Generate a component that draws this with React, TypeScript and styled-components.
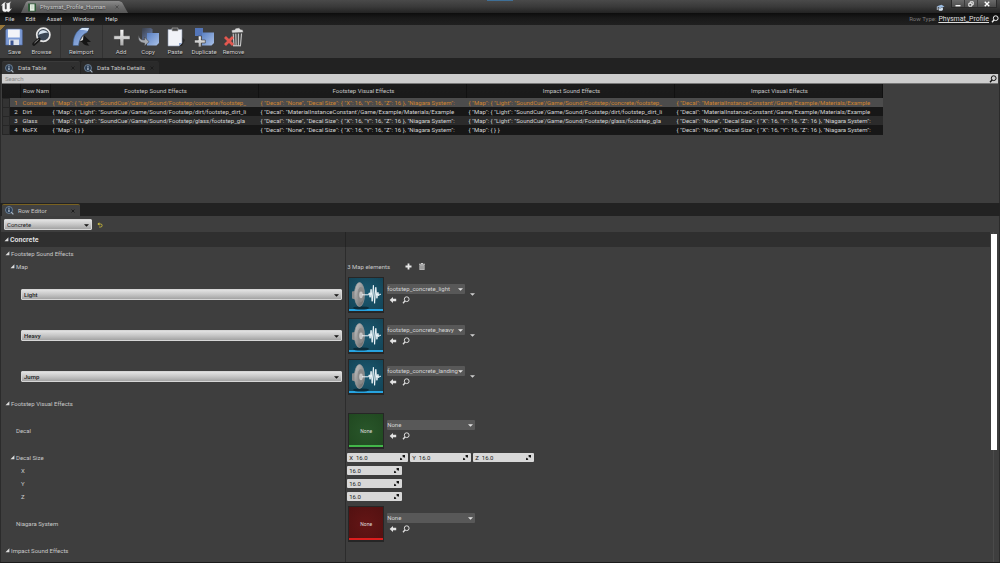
import React from "react";
import styled, { createGlobalStyle } from "styled-components";

const Global = createGlobalStyle`
  * { box-sizing: border-box; }
  body { margin: 0; background: #3e3e3e; }
  button, input, select { font: inherit; color: inherit; margin: 0; padding: 0; border: 0; border-radius: 0; background: none; outline: 0; }
  button, select { cursor: pointer; }
  svg { display: block; flex: none; }
`;

const Window = styled.div`
  display: flex;
  flex-direction: column;
  min-height: 100vh;
  font: 6px/8px Roboto, "Liberation Sans", sans-serif;
  color: #c8c8c8;
  background: #3e3e3e;
  border-bottom: 1px solid #1c1c1c;
`;

const TitleBar = styled.header`
  display: grid;
  grid-template-columns: 1fr 26px 1fr;
  height: 13px;
  background: linear-gradient(#4a4a4a, #3a3a3a 50%, #232323);
`;
const TitleLeft = styled.div`
  display: flex;
  align-items: flex-end;
  gap: 9px;
  padding-left: 1px;
`;
const DocTab = styled.div`
  display: flex;
  align-items: center;
  gap: 4px;
  width: 107px;
  height: 12px;
  padding: 0 9px 0 7px;
  color: #c8c8c8;
  background: linear-gradient(#8c8c8c, #6b6b6b 50%, #565656);
  clip-path: polygon(0 100%, 5px 10%, 7px 0, 98px 0, 101px 10%, 100% 100%);
`;
const DocName = styled.span`
  flex: 1;
  white-space: nowrap;
  text-shadow: 0 1px 1px #333;
`;
const TopMark = styled.div`
  height: 1px;
  background: #3f6f96;
`;
const TitleRight = styled.div`
  display: flex;
  justify-content: flex-end;
  gap: 6px;
  padding-right: 3px;
`;
const Tutorial = styled.button`
  align-self: flex-end;
  height: 11px;
`;
const WindowButtons = styled.div`
  display: flex;
  height: 8px;
  background: linear-gradient(#6a6a6a, #4b4b4b);
  border: 1px solid #2a2a2a;
  border-top: 0;
`;
const WindowButton = styled.button<{ $wide?: boolean }>`
  display: grid;
  place-items: center;
  width: ${(p) => (p.$wide ? 18 : 13)}px;
  border-right: 1px solid #3a3a3a;
  &:last-child { border-right: 0; }
`;

const MenuBar = styled.nav`
  display: flex;
  align-items: center;
  height: 12px;
  padding: 0 1px 0 5px;
  background: linear-gradient(#0d0d0d, #191919 40%, #202020);
`;
const MenuItem = styled.button`
  height: 12px;
  margin-right: 11px;
  color: #d8d8d8;
`;
const RowType = styled.div`
  display: flex;
  align-items: center;
  gap: 2px;
  margin-left: auto;
  color: #7b7b7b;
`;
const TypeLink = styled.a`
  font-size: 7px;
  color: #dcdcdc;
`;

const Toolbar = styled.div`
  display: flex;
  height: 33px;
  padding-left: 1px;
  background: linear-gradient(135deg, #96763a 4px, transparent 4px), #3e3e3e;
`;
const ToolGroup = styled.div`
  display: flex;
  padding: 2px 5px 0;
  border-right: 1px solid #323232;
  &:first-child { padding-left: 0; }
  &:last-child { border-right: 0; }
`;
const ToolButton = styled.button`
  display: flex;
  flex-direction: column;
  align-items: center;
  gap: 1px;
  min-width: 27px;
  height: 30px;
  padding: 0 3px;
  color: #cecece;
  text-shadow: 0 1px 1px #111;
`;

const TabStrip = styled.div<{ $h: number }>`
  display: flex;
  align-items: flex-end;
  height: ${(p) => p.$h}px;
  padding-left: 2px;
  background: #222;
`;
const Tab = styled.button<{ $active?: boolean; $focus?: boolean }>`
  display: flex;
  align-items: center;
  gap: 4px;
  width: 78px;
  height: ${(p) => (p.$focus ? 12 : 13)}px;
  margin-right: 1px;
  padding: 0 5px 0 3px;
  border-top: 1px solid ${(p) => (p.$focus ? "#7a6220" : p.$active ? "#3a3a3a" : "#2c2c2c")};
  border-radius: 2px 2px 0 0;
  background: ${(p) => (p.$focus ? "#414141" : p.$active ? "#303030" : "#2a2a2a")};
  text-align: left;
  white-space: nowrap;
`;
const TabLabel = styled.span`
  flex: 1;
`;

const TablePanel = styled.section`
  min-height: 129px;
  padding: 0 1px;
  border-left: 1px solid #2b2b2b;
  border-right: 1px solid #2b2b2b;
`;
const SearchBox = styled.label`
  display: flex;
  align-items: center;
  height: 10px;
  padding: 0 1px 0 3px;
  color: #111;
  background: #cdcdcd;
  border-bottom: 1px solid #777;
`;
const SearchInput = styled.input`
  flex: 1;
  height: 8px;
  &::placeholder { color: #8a8a8a; opacity: 1; }
`;
const Table = styled.table`
  width: 881px;
  table-layout: fixed;
  border-collapse: collapse;
  color: #d4d4d4;
  background: #181818;
`;
const HeadCell = styled.th<{ $left?: boolean }>`
  height: 14px;
  padding: 0 0 1px 2px;
  overflow: hidden;
  font-weight: 400;
  text-align: ${(p) => (p.$left ? "left" : "center")};
  white-space: nowrap;
  color: #c4c4c4;
  background: linear-gradient(#1c1c1c, #191919);
  border-right: 1px solid #111;
`;
const Row = styled.tr<{ $selected?: boolean; $alt?: boolean }>`
  height: 9px;
  color: ${(p) => (p.$selected ? "#d08430" : "inherit")};
  background: ${(p) => (p.$selected ? "#4c4c4c" : p.$alt ? "#2b2b2b" : "#171717")};
`;
const Cell = styled.td<{ $right?: boolean }>`
  height: 9px;
  padding: 0 3px 0 2px;
  overflow: hidden;
  line-height: 9px;
  text-align: ${(p) => (p.$right ? "right" : "left")};
  white-space: nowrap;
`;
const Handle = styled.td`
  padding: 0;
  background: #333;
  border: 1px solid #262626;
`;

const Editor = styled.section`
  display: flex;
  flex-direction: column;
  flex: 1;
  border-left: 1px solid #2b2b2b;
  border-right: 1px solid #2b2b2b;
`;
const RowPicker = styled.div`
  display: flex;
  align-items: center;
  gap: 5px;
  height: 16px;
  padding: 3px 3px 2px;
`;
const SelectShell = styled.div<{ $w?: string; $h: number; $dark?: boolean }>`
  position: relative;
  width: ${(p) => p.$w ?? "100%"};
  height: ${(p) => p.$h}px;
  color: ${(p) => (p.$dark ? "#d4d4d4" : "#1c1c1c")};
  background: ${(p) => (p.$dark ? "#585858" : "linear-gradient(#e2e2e2, #c9c9c9 45%, #a3a3a3)")};
  border: ${(p) => (p.$dark ? "0" : "1px solid #d6d6d6")};
  border-radius: 1px;
  > svg { position: absolute; right: 2px; top: calc(50% - 1px); pointer-events: none; }
`;
const NativeSelect = styled.select<{ $dark?: boolean; $strong?: boolean }>`
  display: block;
  appearance: none;
  width: 100%;
  height: 100%;
  padding: 0 6px 0 ${(p) => (p.$dark ? 0 : 2)}px;
  font-weight: ${(p) => (p.$strong ? 500 : 400)};
`;
const IconButton = styled.button`
  display: grid;
  place-items: center;
`;

const Scroller = styled.div`
  display: flex;
  flex: 1;
  padding-right: 2px;
`;
const Details = styled.div`
  flex: 1;
  background: linear-gradient(90deg, transparent 34.8%, #2c2c2c 0, #2c2c2c calc(34.8% + 1px), transparent 0);
`;
const ScrollTrack = styled.div`
  width: 7px;
  padding: 2px 0 0 1px;
  background: linear-gradient(90deg, transparent 3px, #4a4a4a 3px, #4a4a4a 4px, transparent 4px);
`;
const ScrollThumb = styled.div`
  height: 66%;
  background: #fff;
`;
const Category = styled.h2`
  display: flex;
  align-items: center;
  gap: 1px;
  height: 15px;
  margin: 0;
  padding-left: 3px;
  font-size: 7px;
  font-weight: 700;
  color: #dedede;
  background: linear-gradient(90deg, #2f2f2f 34.8%, #242424 0, #242424 calc(34.8% + 1px), #2f2f2f 0);
`;
const Prop = styled.div<{ $tall?: boolean }>`
  display: grid;
  grid-template-columns: calc(34.8% + 1px) 1fr;
  align-items: center;
  height: ${(p) => (p.$tall ? 41 : 13)}px;
`;
const Name = styled.div<{ $level: number; $fold?: boolean }>`
  display: flex;
  align-items: center;
  gap: 1px;
  padding: 0 4px 0 ${(p) => p.$level * 5 + (p.$fold ? -1 : 0)}px;
`;
const Value = styled.div`
  display: flex;
  align-items: center;
  padding-left: 1px;
`;
const MapItems = styled.div`
  padding: 1px 0 0;
`;
const MapTools = styled.div`
  display: flex;
  gap: 7px;
  margin-left: 15px;
`;
const Thumb = styled.div<{ $kind: "sound" | "decal" | "niagara" }>`
  display: grid;
  place-items: center;
  width: 36px;
  height: 36px;
  margin: 0 3px 0 1px;
  font-size: 5px;
  color: #ddd;
  border: 1px solid #262626;
  box-shadow: inset 0 -1px #262626, inset 0 -3px ${(p) => ({ sound: "#27a3e0", decal: "#42b649", niagara: "#dc1e1e" })[p.$kind]};
  background: ${(p) =>
    ({
      sound: "radial-gradient(circle at 50% 45%, #1b5a72, #134254)",
      decal: "radial-gradient(circle, #29562a, #204820)",
      niagara: "radial-gradient(circle, #641515, #521111)",
    })[p.$kind]};
`;
const AssetStack = styled.div`
  display: flex;
  flex-direction: column;
  gap: 2px;
  padding-bottom: 2px;
`;
const AssetTools = styled.div`
  display: flex;
  gap: 5px;
  padding-left: 2px;
`;
const MoreButton = styled(IconButton)`
  margin-left: 4px;
  width: 7px;
  height: 6px;
`;
const NumberBox = styled.label<{ $wide?: boolean }>`
  display: flex;
  align-items: center;
  gap: 3px;
  width: ${(p) => (p.$wide ? 61 : 55)}px;
  height: 9px;
  margin-right: 2px;
  padding: 0 3px 0 2px;
  color: #222;
  background: #d8d8d8;
  border-radius: 1px;
`;
const NumberInput = styled.input`
  flex: 1;
  min-width: 0;
  height: 9px;
`;

/* ---------- icons ---------- */
const Caret = ({ w = 5, color = "#151515" }: { w?: number; color?: string }) => (
  <svg width={w} height={3} viewBox="0 0 6 3"><path d="M0 0h6L3 3z" fill={color} /></svg>
);
const Fold = () => (
  <svg width="5" height="5" viewBox="0 0 5 5"><path d="M4.4 .3V4.2H.5z" fill="#ddd" /></svg>
);
const Lens = ({ size = 8, color = "#ddd" }: { size?: number; color?: string }) => (
  <svg width={size} height={size} viewBox="0 0 8 8" fill="none" stroke={color}>
    <circle cx="4.7" cy="3.2" r="2.4" strokeWidth="1" />
    <path d="M3 5L1 7.2" strokeWidth="1.4" />
  </svg>
);
const BackArrow = () => (
  <svg width="8" height="8" viewBox="0 0 8 8"><path d="M.6 4L4 1v1.700h3.200v2.600H4V7z" fill="#e2e2e2" /></svg>
);
const Plus = () => (
  <svg width="7" height="7" viewBox="0 0 7 7"><path d="M2.600 .5h1.800v2.100h2.100v1.800H4.400v2.100H2.600V4.400H.5V2.600h2.100z" fill="#e8e8e8" /></svg>
);
const Trash = () => (
  <svg width="6" height="7" viewBox="0 0 6 7">
    <path d="M2 0h2v.7h2v1H0v-1h2z" fill="#cfcfcf" />
    <path d="M.4 2.100h5.200V7H.4z" fill="#bdbdbd" />
    <path d="M1.800 2.800v3.500M3 2.800v3.500M4.200 2.800v3.500" stroke="#666" strokeWidth=".5" />
  </svg>
);
const Reset = () => (
  <svg width="6" height="6" viewBox="0 0 6 6" fill="none" stroke="#c9b93a">
    <path d="M1.200 2h2.400a1.400 1.400 0 0 1 0 3H2.200" strokeWidth=".9" />
    <path d="M2.400 .2L.4 2l2 1.700z" fill="#c9b93a" stroke="none" />
  </svg>
);
const Spin = () => (
  <svg width="5" height="5" viewBox="0 0 5 5" fill="#161616">
    <path d="M2 0h3v3L3.900 1.900 3.200 2.500 2.400 1.700 3.100 1z" />
    <path d="M0 2.400L1 3.400l.4-.4.7.7-.5.4L2.500 5H0z" />
  </svg>
);
const TabIcon = () => (
  <svg width="9" height="9" viewBox="0 0 9 9">
    <circle cx="4" cy="4" r="3.500" fill="#2a3b50" stroke="#71859a" strokeWidth=".9" />
    <path d="M3.400 3.400h1.100v2.700H3.400zM3.400 1.800h1.100v1H3.400z" fill="#cfdcea" />
    <path d="M6.200 6.200L8.400 8.400" stroke="#a9b8c7" strokeWidth="1.200" />
  </svg>
);
const Cross = ({ color = "#1b1b1b", s = 4 }: { color?: string; s?: number }) => (
  <svg width={s} height={s} viewBox="0 0 4 4"><path d="M.5 .5l3 3M3.500 .5l-3 3" stroke={color} strokeWidth=".9" /></svg>
);
const Logo = () => (
  <svg width="11" height="12" viewBox="0 0 11 12">
    <path d="M.5 4.600C1.300 3 2.600 1.800 4.600 1.200c-.6.5-.8.9-.8 1.500v4.600c0 .7.4 1.100.9 1.100.4 0 .8-.2 1.100-.5V3.400c0-.5-.2-.8-.6-1 1.800-.2 3.400-.7 4.700-1.700-.8.9-1.100 1.400-1.100 2.300v4.400c0 .6.2.8.5.8.3 0 .7-.3 1.100-.7-.6 1.700-2 2.900-3.300 3.500L5.900 9.900c-.6.6-1.200.9-2.100.9C2.300 10.700 1.500 9.700 1.500 8.300V4.500c0-.4-.1-.6-.4-.6-.2 0-.4.3-.6.7z" fill="#f6f6f6" stroke="#f6f6f6" strokeWidth=".3" />
  </svg>
);
const DocIcon = () => (
  <svg width="8" height="9" viewBox="0 0 8 9">
    <path d="M0 .5h8v8H0z" fill="#2f5a38" />
    <path d="M2 1.200h4.500v6.600H2z" fill="#e4ede2" />
    <path d="M3 3h2.500M3 5h2.500" stroke="#a9bda9" strokeWidth=".6" />
  </svg>
);
const Cap = () => (
  <svg width="9" height="8" viewBox="0 0 9 8">
    <path d="M1 2.200L5.500 .8 8.500 2.500 4 4.300z" fill="#9bbbe0" />
    <path d="M2.600 4v2.300c1 .9 3.200.7 4.300-.3V3.600L4 4.600z" fill="#d5e3f2" />
    <path d="M1.300 2.500v3.500" stroke="#cfdced" strokeWidth=".8" />
  </svg>
);

const Gradients = () => (
  <svg width="0" height="0" aria-hidden="true">
    <defs>
      <linearGradient id="blue" x1="0" y1="0" x2="1" y2="1">
        <stop offset="0" stopColor="#5a80c2" /><stop offset="1" stopColor="#a9c1e8" />
      </linearGradient>
      <linearGradient id="slate" x1="0" y1="0" x2="1" y2="1">
        <stop offset="0" stopColor="#3a3f49" /><stop offset="1" stopColor="#6d83b3" />
      </linearGradient>
      <linearGradient id="steel" x1="0" y1="0" x2="0" y2="1">
        <stop offset="0" stopColor="#fafafa" /><stop offset="1" stopColor="#a8a8a8" />
      </linearGradient>
      <linearGradient id="cone" x1="0" y1="0" x2="1" y2="1">
        <stop offset="0" stopColor="#c9c9c9" /><stop offset="1" stopColor="#5e5e5e" />
      </linearGradient>
    </defs>
  </svg>
);

const toolArt: Record<string, React.ReactNode> = {
  Save: (
    <>
      <path d="M2.500 2h15l.8 1.500v14.500H1.800V3.500z" fill="#7d9cd6" stroke="#4f69a2" strokeWidth=".6" />
      <path d="M4 2.500h11.800v8H4z" fill="#f2f4f8" />
      <path d="M5 12.500h10V18H5z" fill="#dfe3ea" />
      <path d="M6.500 13.500h3V18h-3z" fill="#3c5590" />
    </>
  ),
  Browse: (
    <>
      <circle cx="12.300" cy="7.800" r="6.600" fill="#3a4654" stroke="#e6e6e6" strokeWidth="1.700" />
      <path d="M7.500 8a5 5 0 0 1 9.500-2c-3-.8-6 .2-9.500 2z" fill="#d5e2ee" />
      <path d="M8 12.500L3 17" stroke="#181818" strokeWidth="3.600" strokeLinecap="round" />
      <path d="M7.600 12.300L3.500 16" stroke="#8e8e8e" strokeWidth="1" />
    </>
  ),
  Reimport: (
    <>
      <path d="M2 18.500C2 10 5 4 11 1h7l-2 4.500C11.500 7 8.500 11.500 7.500 18.500z" fill="url(#blue)" stroke="#3f6290" strokeWidth=".6" />
      <path d="M11 1h7l-1.300 3C14 2.800 11.500 2.800 8.500 3z" fill="#d3e2f4" />
      <path d="M12.500 8L20 15h-4c.4 1.500 1 2.500 2.500 3.500-3.500 0-6-.5-7.500-3.500H8.500z" fill="#151515" />
      <path d="M12.500 8L8.800 14.500 12 13z" fill="#d8d8d8" />
    </>
  ),
  Add: <path d="M9 2.500h3.800v6.300h6.200v3.700h-6.200v6.300H9v-6.300H2.800V8.800H9z" fill="url(#steel)" stroke="#2a2a2a" strokeWidth=".5" />,
  Copy: (
    <>
      <path d="M4 1h9l1.500 1.500V13H4z" fill="url(#slate)" />
      <path d="M9 6h12v10l-2.500 2.500H9z" fill="url(#blue)" />
      <path d="M1 8C1 11.500 3 13 6.500 13v-3l4.500 4.800L6.500 19v-3C2 16-1 12.500 1 8z" fill="#a7abb2" stroke="#3b3b3b" strokeWidth=".5" />
    </>
  ),
  Paste: (
    <>
      <path d="M15 8l5 5-3 6H8z" fill="#1d1d1d" opacity=".6" />
      <path d="M3 2.500h14v13.500l-3 3H3z" fill="#f1f3f8" stroke="#8894ad" strokeWidth=".6" />
      <path d="M17 16h-3v3z" fill="#8ba3cf" />
      <path d="M7 1h6v3H7z" fill="#4a4a4a" stroke="#b9b9b9" strokeWidth=".6" />
    </>
  ),
  Duplicate: (
    <>
      <path d="M1 1h8v8H1z" fill="#5375b8" />
      <path d="M8 5.500h12V16l-2.500 2.500H8z" fill="url(#blue)" />
      <path d="M4.300 9h3v4h4v3h-4v4h-3v-4H.5v-3h3.800z" fill="url(#steel)" stroke="#333" strokeWidth=".6" />
    </>
  ),
  Remove: (
    <>
      <path d="M9 6h10.500L18 19.200H10z" fill="#4a4a4a" />
      <path d="M10.200 6.500l.8 12M12.800 6.500l.3 12M15.400 6.500v12M18.500 6.500l-1 12" stroke="#cfcfcf" strokeWidth="1" />
      <path d="M8.500 3.200L12 2.500l.5-1.300 4-.4.500 1.300 3 .9.300 2.500L9 6z" fill="#dcdcdc" stroke="#333" strokeWidth=".5" />
      <path d="M10 18.800h8" stroke="#dcdcdc" strokeWidth="1" />
      <path d="M2 10l8 8M10 10l-8 8" stroke="#e2574f" strokeWidth="2.800" />
    </>
  ),
};

const SoundArt = () => (
  <svg width="34" height="32" viewBox="0 0 34 32">
    <ellipse cx="12" cy="29" rx="8" ry="1.600" fill="#0b2c3a" />
    <path d="M3 12.500l5-1V21l-5-1.500z" fill="#8b8b8b" />
    <ellipse cx="10.500" cy="15.500" rx="5" ry="12" fill="url(#cone)" stroke="#9b9b9b" strokeWidth=".7" />
    <ellipse cx="11.800" cy="15.500" rx="3.200" ry="7.500" fill="#8a8a8a" />
    <ellipse cx="12" cy="15.800" rx="1.800" ry="3.400" fill="#c6c6c6" />
    <path d="M13 15.800h6.500l.8-2 .8 4.500 1-8 1.100 12 1.200-16 1.200 18 1.200-16 1.100 11 1-6 .8 3.500.6-1.500H32" fill="none" stroke="#eef6fa" strokeWidth="1" strokeLinejoin="round" />
  </svg>
);

/* ---------- data ---------- */
const soundCell = (path: string) => `{ "Map": { "Light": "SoundCue'/Game/Sound/Footstep/${path}`;
const noDecal = `{ "Decal": "None", "Decal Size": { "X": 16, "Y": 16, "Z": 16 }, "Niagara System":`;
const decal = `{ "Decal": "MaterialInstanceConstant'/Game/Example/Materials/Example`;
const rows = [
  ["Concrete", soundCell("concrete/footstep_"), noDecal, soundCell("concrete/footstep_"), decal],
  ["Dirt", soundCell("dirt/footstep_dirt_li"), decal, soundCell("dirt/footstep_dirt_li"), decal],
  ["Glass", soundCell("glass/footstep_gla"), noDecal, soundCell("glass/footstep_gla"), noDecal],
  ["NoFX", `{ "Map": { } }`, noDecal, `{ "Map": { } }`, noDecal],
];
const toolGroups = [["Save", "Browse"], ["Reimport"], ["Add", "Copy", "Paste", "Duplicate", "Remove"]];
const mapItems = [
  ["Light", "footstep_concrete_light"],
  ["Heavy", "footstep_concrete_heavy"],
  ["Jump", "footstep_concrete_landing"],
];

const Combo = ({ label, value, h, w, dark, strong }: { label: string; value: string; h: number; w?: string; dark?: boolean; strong?: boolean }) => (
  <SelectShell $w={w} $h={h} $dark={dark}>
    <NativeSelect aria-label={label} $dark={dark} $strong={strong} defaultValue={value}>
      <option>{value}</option>
    </NativeSelect>
    <Caret color={dark ? "#e2e2e2" : "#151515"} />
  </SelectShell>
);

const Asset = ({ kind, value, label }: { kind: "sound" | "decal" | "niagara"; value: string; label: string }) => (
  <Value>
    <Thumb $kind={kind}>{kind === "sound" ? <SoundArt /> : value}</Thumb>
    <AssetStack>
      <Combo label={label} value={value} h={10} w={kind === "sound" ? "78px" : "88px"} dark />
      <AssetTools>
        <IconButton aria-label="Use selected asset"><BackArrow /></IconButton>
        <IconButton aria-label="Browse to asset"><Lens /></IconButton>
      </AssetTools>
    </AssetStack>
    {kind === "sound" && <MoreButton aria-label="More options"><Caret color="#cfcfcf" /></MoreButton>}
  </Value>
);

const NumberField = ({ axis, inline }: { axis: string; inline?: boolean }) => (
  <NumberBox $wide={inline}>
    {inline && <span>{axis}</span>}
    <NumberInput type="text" inputMode="decimal" aria-label={axis} defaultValue="16.0" />
    <Spin />
  </NumberBox>
);

const Heading = ({ level, children }: { level: number; children: React.ReactNode }) => (
  <Name $level={level} $fold><Fold /><span>{children}</span></Name>
);

const PanelTab = ({ label, active, focus }: { label: string; active?: boolean; focus?: boolean }) => (
  <Tab $active={active} $focus={focus}>
    <TabIcon />
    <TabLabel>{label}</TabLabel>
    <Cross />
  </Tab>
);

export default function App() {
  return (
    <Window>
      <Global />
      <Gradients />
      <TitleBar>
        <TitleLeft>
          <Logo />
          <DocTab>
            <DocIcon />
            <DocName>Physmat_Profile_Human</DocName>
            <Cross color="#4a4a4a" />
          </DocTab>
        </TitleLeft>
        <TopMark />
        <TitleRight>
          <Tutorial aria-label="Tutorials"><Cap /></Tutorial>
          <WindowButtons>
            <WindowButton aria-label="Minimize">
              <svg width="6" height="6" viewBox="0 0 6 6"><path d="M.5 4h5v1.400h-5z" fill="#f4f4f4" /></svg>
            </WindowButton>
            <WindowButton aria-label="Restore">
              <svg width="6" height="6" viewBox="0 0 6 6" fill="none" stroke="#f4f4f4"><path d="M2.200 2V.8h3v3H4" /><path d="M.8 2.300h3v2.900h-3z" /></svg>
            </WindowButton>
            <WindowButton $wide aria-label="Close"><Cross color="#fff" s={6} /></WindowButton>
          </WindowButtons>
        </TitleRight>
      </TitleBar>

      <MenuBar>
        {["File", "Edit", "Asset", "Window", "Help"].map((m) => <MenuItem key={m}>{m}</MenuItem>)}
        <RowType>
          <span>Row Type:</span>
          <TypeLink href="#physmat">Physmat_Profile</TypeLink>
          <IconButton aria-label="Find row type"><Lens color="#eee" /></IconButton>
        </RowType>
      </MenuBar>

      <Toolbar>
        {toolGroups.map((g) => (
          <ToolGroup key={g[0]}>
            {g.map((t) => (
              <ToolButton key={t}>
                <svg width="21" height="20" viewBox="0 0 21 20">{toolArt[t]}</svg>
                <span>{t}</span>
              </ToolButton>
            ))}
          </ToolGroup>
        ))}
      </Toolbar>

      <TabStrip $h={16}>
        <PanelTab label="Data Table" active />
        <PanelTab label="Data Table Details" />
      </TabStrip>

      <TablePanel>
        <SearchBox>
          <SearchInput type="text" placeholder="Search" aria-label="Search" />
          <Lens color="#111" />
        </SearchBox>
        <Table>
          <colgroup>
            <col style={{ width: 7 }} />
            <col style={{ width: 11 }} />
            <col style={{ width: 30 }} />
            <col /><col /><col /><col />
          </colgroup>
          <thead>
            <tr>
              <HeadCell colSpan={2} />
              <HeadCell $left>Row Nam</HeadCell>
              <HeadCell>Footstep Sound Effects</HeadCell>
              <HeadCell>Footstep Visual Effects</HeadCell>
              <HeadCell>Impact Sound Effects</HeadCell>
              <HeadCell>Impact Visual Effects</HeadCell>
            </tr>
          </thead>
          <tbody>
            {rows.map((r, i) => (
              <Row key={r[0]} $selected={i === 0} $alt={i === 2}>
                <Handle />
                <Cell $right>{i + 1}</Cell>
                {r.map((c, j) => <Cell key={j}>{c}</Cell>)}
              </Row>
            ))}
          </tbody>
        </Table>
      </TablePanel>

      <TabStrip $h={13}>
        <PanelTab label="Row Editor" focus />
      </TabStrip>

      <Editor>
        <RowPicker>
          <Combo label="Row" value="Concrete" h={11} w="88px" />
          <IconButton aria-label="Reset to default"><Reset /></IconButton>
        </RowPicker>
        <Scroller>
          <Details>
            <Category><Fold />Concrete</Category>
            <Prop><Heading level={1}>Footstep Sound Effects</Heading></Prop>
            <Prop>
              <Heading level={2}>Map</Heading>
              <Value>
                3 Map elements
                <MapTools>
                  <IconButton aria-label="Add element"><Plus /></IconButton>
                  <IconButton aria-label="Remove all elements"><Trash /></IconButton>
                </MapTools>
              </Value>
            </Prop>
            <MapItems>
              {mapItems.map(([key, asset]) => (
                <Prop $tall key={key}>
                  <Name $level={4}><Combo label="Key" value={key} h={11} strong /></Name>
                  <Asset kind="sound" value={asset} label={`${key} sound`} />
                </Prop>
              ))}
            </MapItems>
            <Prop><Heading level={1}>Footstep Visual Effects</Heading></Prop>
            <Prop $tall>
              <Name $level={3}>Decal</Name>
              <Asset kind="decal" value="None" label="Decal" />
            </Prop>
            <Prop>
              <Heading level={2}>Decal Size</Heading>
              <Value>{["X", "Y", "Z"].map((a) => <NumberField key={a} axis={a} inline />)}</Value>
            </Prop>
            {["X", "Y", "Z"].map((a) => (
              <Prop key={a}>
                <Name $level={4}>{a}</Name>
                <Value><NumberField axis={a} /></Value>
              </Prop>
            ))}
            <Prop $tall>
              <Name $level={3}>Niagara System</Name>
              <Asset kind="niagara" value="None" label="Niagara System" />
            </Prop>
            <Prop><Heading level={1}>Impact Sound Effects</Heading></Prop>
          </Details>
          <ScrollTrack><ScrollThumb /></ScrollTrack>
        </Scroller>
      </Editor>
    </Window>
  );
}
